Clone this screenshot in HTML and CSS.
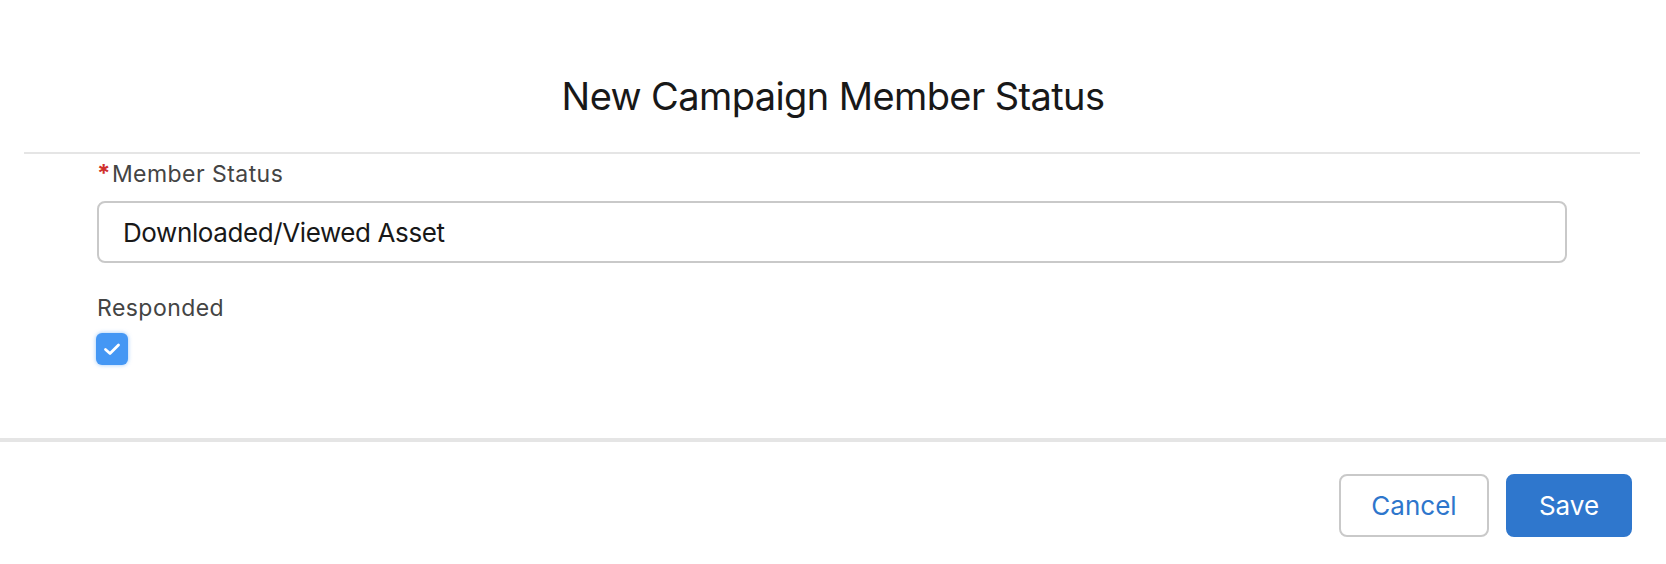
FILE: index.html
```html
<!DOCTYPE html>
<html lang="en">
<head>
<meta charset="utf-8">
<title>New Campaign Member Status</title>
<link rel="stylesheet" href="styles.css">
</head>
<body>
<div class="modal">
  <header class="modal-header">
    <h1 class="modal-title">New Campaign Member Status</h1>
  </header>
  <div class="header-rule"></div>
  <div class="modal-body">
    <div class="field">
      <label class="field-label"><abbr class="required" title="required">*</abbr>Member Status</label>
      <div class="input">Downloaded/Viewed Asset</div>
    </div>
    <div class="field field-checkbox">
      <span class="field-label">Responded</span>
      <span class="checkbox">
        <svg width="32" height="32" viewBox="0 0 32 32" aria-hidden="true"><path d="M9.5 16.5 L14 20.5 L22.5 12" fill="none" stroke="#ffffff" stroke-width="2.8" stroke-linecap="round" stroke-linejoin="round"/></svg>
      </span>
    </div>
  </div>
  <footer class="modal-footer">
    <button class="btn btn-neutral" type="button">Cancel</button>
    <button class="btn btn-brand" type="button">Save</button>
  </footer>
</div>
</body>
</html>
```
FILE: styles.css
```css
html, body {
  margin: 0;
  padding: 0;
  background: #ffffff;
}

body {
  font-family: Inter, "Noto Sans", "Liberation Sans", sans-serif;
  color: #181818;
}

.modal {
  width: 1666px;
  height: 564px;
  display: flex;
  flex-direction: column;
}

.modal-header {
  padding: 72px 0 32px;
  text-align: center;
}

.modal-title {
  margin: 0;
  font-size: 38px;
  line-height: 48px;
  font-weight: 400;
  color: #181818;
  letter-spacing: -0.6px;
}

.header-rule {
  height: 2px;
  margin: 0 26px 0 24px;
  background: #e5e5e5;
}

.modal-body {
  padding: 4px 99px 73px 97px;
}

.field-label {
  display: block;
  height: 32px;
  font-size: 23px;
  line-height: 32px;
  color: #444444;
  letter-spacing: 0.45px;
}

.required {
  text-decoration: none;
  border: 0;
  color: #d0302c;
  font-size: 24px;
  font-weight: 700;
  margin-right: 1px;
}

.input {
  margin-top: 11px;
  box-sizing: border-box;
  height: 62px;
  border: 2px solid #c9c9c9;
  border-radius: 8px;
  padding: 0 24px;
  display: flex;
  align-items: center;
  font-size: 26px;
  letter-spacing: -0.4px;
  color: #181818;
}

.field-checkbox {
  margin-top: 29px;
}

.checkbox {
  display: flex;
  margin-top: 9px;
  margin-left: -1px;
  width: 32px;
  height: 32px;
  border-radius: 6px;
  background: #4497f4;
  box-shadow: 0 0 4px rgba(68, 151, 244, 0.55);
}

.modal-footer {
  border-top: 4px solid #e5e5e5;
  padding: 32px 34px 0;
  display: flex;
  justify-content: flex-end;
  gap: 17px;
}

.btn {
  box-sizing: border-box;
  height: 63px;
  border-radius: 8px;
  font-family: Inter, "Noto Sans", "Liberation Sans", sans-serif;
  font-size: 26px;
  font-weight: 400;
  padding: 0;
  cursor: pointer;
}

.btn-neutral {
  width: 150px;
  background: #ffffff;
  border: 2px solid #c9c9c9;
  color: #2e76cc;
}

.btn-brand {
  width: 126px;
  background: #2f77cd;
  border: 2px solid #2f77cd;
  color: #ffffff;
}
```
